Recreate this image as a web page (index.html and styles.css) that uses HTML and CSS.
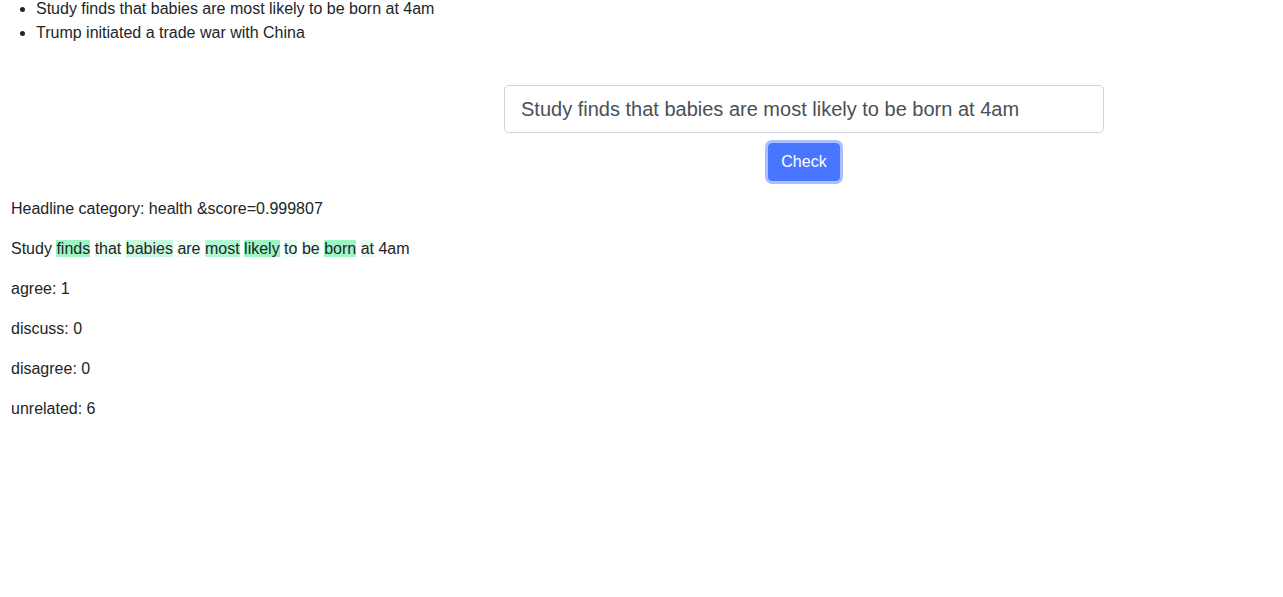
FILE: index.html
```html
<!DOCTYPE html>
<html lang="en">
<head>
<meta charset="utf-8">
<title>Headline checker</title>
<link rel="stylesheet" href="styles.css">
</head>
<body>
<ul class="headlines">
  <li>Study finds that babies are most likely to be born at 4am</li>
  <li>Trump initiated a trade war with China</li>
</ul>
<form class="check-form">
  <input class="headline-input" type="text" value="Study finds that babies are most likely to be born at 4am">
  <button class="check-btn" type="button">Check</button>
</form>
<div class="results">
  <p>Headline category: health &amp;score=0.999807</p>
  <p><span class="w w0">Study</span> <span class="w w5">finds</span> <span class="w w1">that</span> <span class="w w3">babies</span> <span class="w w1b">are</span> <span class="w w4">most</span> <span class="w w5">likely</span> <span class="w w1">to</span> <span class="w w1b">be</span> <span class="w w5">born</span> <span class="w w1">at</span> <span class="w w0">4am</span></p>
  <p>agree: 1</p>
  <p>discuss: 0</p>
  <p>disagree: 0</p>
  <p>unrelated: 6</p>
</div>
</body>
</html>
```
FILE: styles.css
```css
html, body {
  margin: 0;
  padding: 0;
  background: #fff;
}
body {
  font-family: "Liberation Sans", Arial, sans-serif;
  font-size: 16px;
  line-height: 1.5;
  color: #212529;
}
.headlines {
  margin: -3px 0 0;
  padding-left: 36px;
}
.check-form {
  margin-top: 40px;
  margin-left: 504px;
  width: 600px;
  display: flex;
  flex-direction: column;
  align-items: center;
  gap: 10px;
}
.headline-input {
  box-sizing: border-box;
  width: 600px;
  height: 48px;
  padding: 8px 16px;
  font-family: "Liberation Sans", Arial, sans-serif;
  font-size: 20px;
  line-height: 1.5;
  color: #495057;
  background: #fff;
  border: 1px solid #ced4da;
  border-radius: 4.8px;
  outline: none;
}
.check-btn {
  box-sizing: border-box;
  height: 38px;
  padding: 6px 12px;
  font-family: "Liberation Sans", Arial, sans-serif;
  font-size: 16px;
  line-height: 1.5;
  color: #fff;
  background: #4876ff;
  border: 1px solid #4876ff;
  border-radius: 4px;
  box-shadow: 0 0 0 3px #a9c0ff;
  cursor: pointer;
}
.results {
  margin-top: 16px;
  padding-left: 11px;
}
.results p {
  margin: 0 0 16px;
}
.w0 { background: transparent; }
.w1 { background: #e5fcef; }
.w1b { background: #edfdf4; }
.w3 { background: #c6f9dc; }
.w4 { background: #b0f8cf; }
.w5 { background: #9cf6c3; }
```
